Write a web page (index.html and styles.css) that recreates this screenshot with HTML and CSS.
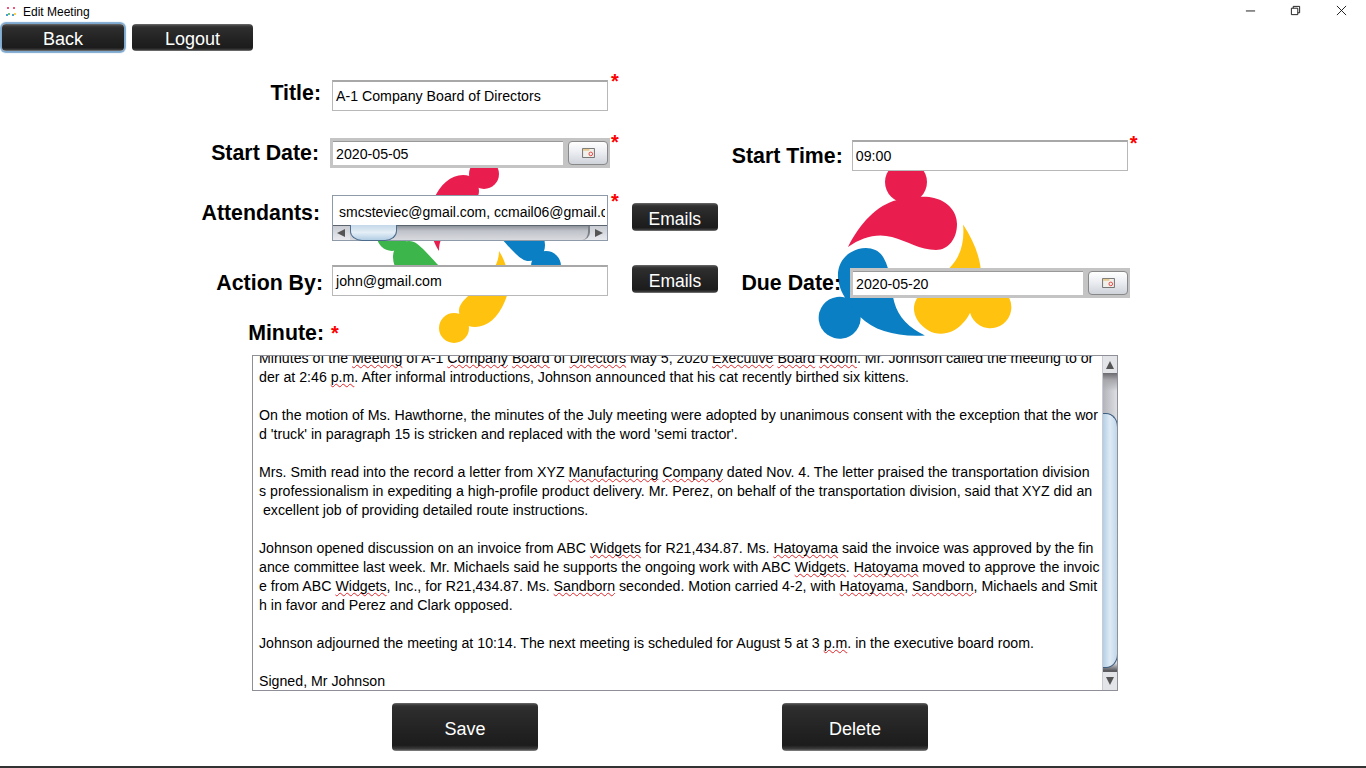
FILE: index.html
```html
<!DOCTYPE html>
<html lang="en">
<head>
<meta charset="utf-8">
<title>Edit Meeting</title>
<link rel="stylesheet" href="styles.css">
</head>
<body>
<div class="window">
  <header class="titlebar">
    <svg class="app-icon" viewBox="0 0 12 12"><circle cx="3" cy="2" r="1" fill="#e91e4f"/><circle cx="9" cy="2" r="1" fill="#e91e4f"/><circle cx="2" cy="9" r="1" fill="#0a7fc4"/><circle cx="8" cy="9" r="1" fill="#0a7fc4"/><circle cx="4" cy="8" r="1" fill="#3cb54a"/><circle cx="10" cy="8" r="1" fill="#ffc20e"/></svg>
    <span class="window-title">Edit Meeting</span>
    <div class="controls">
      <svg class="ctl ctl-min" viewBox="0 0 12 12"><path d="M1 6.5h10" stroke="#111" fill="none"/></svg>
      <svg class="ctl ctl-max" viewBox="0 0 12 12"><path d="M1.5 3.5h7v7h-7zM3.5 3.5v-2h7v7h-2" stroke="#111" fill="none"/></svg>
      <svg class="ctl ctl-close" viewBox="0 0 12 12"><path d="M1 1l10 10M11 1L1 11" stroke="#111" fill="none"/></svg>
    </div>
  </header>
  <nav class="toolbar">
    <button class="btn btn-back btn-focus">Back</button>
    <button class="btn btn-logout">Logout</button>
  </nav>
  <main class="form">
    <svg class="logo logo-small" viewBox="-100 -100 200 200">
      <defs>
        <g id="blade4">
          <circle cx="-15" cy="77" r="15"/>
          <path d="M30 0C39 14 43 34 36 50C29 67 18 76 6 76C-3 76-10 70-10 60C-10 54-6 50 0 44C12 32 30 20 30 0Z"/>
        </g>
      </defs>
      <use href="#blade4" fill="#ffc20e"/>
      <use href="#blade4" fill="#3cb54a" transform="rotate(90)"/>
      <use href="#blade4" fill="#e91e4f" transform="rotate(180)"/>
      <use href="#blade4" fill="#0a7fc4" transform="rotate(270)"/>
    </svg>
    <svg class="logo logo-large" viewBox="-100 -110 200 220">
      <defs>
        <g id="blade3">
          <circle cx="-6" cy="-87" r="21"/>
          <path d="M-64-22C-52-46-35-64-15-69C5-73 15-73 22-71C36-68 45-57 45-45C45-30 36-19 24-19C8-19-5-28-20-32C-35-36-50-32-64-22Z"/>
        </g>
      </defs>
      <use href="#blade3" fill="#e91e4f"/>
      <use href="#blade3" fill="#ffc20e" transform="rotate(120)"/>
      <use href="#blade3" fill="#0a7fc4" transform="rotate(240)"/>
    </svg>

    <div class="row row-title">
      <label class="label label-title">Title:</label>
      <div class="field field-title">A-1 Company Board of Directors</div>
      <span class="star star-title">*</span>
    </div>

    <div class="row row-start">
      <label class="label label-start">Start Date:</label>
      <div class="date date-start">
        <div class="date-text">2020-05-05</div>
        <button class="date-btn"><svg viewBox="0 0 14 11"><path d="M.5.5h13v10H.5z" fill="#f2f0ea" stroke="#666"/><path d="M1 1h7v2H1z" fill="#e6c98e"/><circle cx="9.5" cy="6.5" r="2" fill="none" stroke="#e0393a"/></svg></button>
      </div>
      <span class="star star-start">*</span>
      <label class="label label-time">Start Time:</label>
      <div class="field field-time">09:00</div>
      <span class="star star-time">*</span>
    </div>

    <div class="row row-attend">
      <label class="label label-attend">Attendants:</label>
      <div class="scrollbox">
        <div class="scrollbox-text">smcsteviec@gmail.com, ccmail06@gmail.com</div>
        <div class="hbar">
          <span class="arrow arrow-left"></span>
          <div class="hbar-track"><div class="hbar-thumb"></div></div>
          <span class="arrow arrow-right"></span>
        </div>
      </div>
      <span class="star star-attend">*</span>
      <button class="btn btn-emails btn-emails-a">Emails</button>
    </div>

    <div class="row row-action">
      <label class="label label-action">Action By:</label>
      <div class="field field-action">john@gmail.com</div>
      <button class="btn btn-emails btn-emails-b">Emails</button>
      <label class="label label-due">Due Date:</label>
      <div class="date date-due">
        <div class="date-text">2020-05-20</div>
        <button class="date-btn"><svg viewBox="0 0 14 11"><path d="M.5.5h13v10H.5z" fill="#f2f0ea" stroke="#666"/><path d="M1 1h7v2H1z" fill="#e6c98e"/><circle cx="9.5" cy="6.5" r="2" fill="none" stroke="#e0393a"/></svg></button>
      </div>
    </div>

    <div class="row row-minute">
      <label class="label label-minute">Minute:</label>
      <span class="star star-minute">*</span>
    </div>

    <div class="minutes">
      <div class="minutes-text">
        <div class="line">Minutes of the <u>Meeting</u> of A-1 <u>Company</u> <u>Board</u> of <u>Directors</u> May 5, 2020 <u>Executive</u> <u>Board</u> <u>Room</u>. Mr. Johnson called the meeting to or</div>
        <div class="line">der at 2:46 <u>p.m</u>. After informal introductions, Johnson announced that his cat recently birthed six kittens.</div>
        <div class="line">&nbsp;</div>
        <div class="line">On the motion of Ms. Hawthorne, the minutes of the July meeting were adopted by unanimous consent with the exception that the wor</div>
        <div class="line">d 'truck' in paragraph 15 is stricken and replaced with the word 'semi tractor'.</div>
        <div class="line">&nbsp;</div>
        <div class="line">Mrs. Smith read into the record a letter from XYZ <u>Manufacturing</u> <u>Company</u> dated Nov. 4. The letter praised the transportation division</div>
        <div class="line">s professionalism in expediting a high-profile product delivery. Mr. Perez, on behalf of the transportation division, said that XYZ did an</div>
        <div class="line">&nbsp;excellent job of providing detailed route instructions.</div>
        <div class="line">&nbsp;</div>
        <div class="line">Johnson opened discussion on an invoice from ABC <u>Widgets</u> for R21,434.87. Ms. <u>Hatoyama</u> said the invoice was approved by the fin</div>
        <div class="line">ance committee last week. Mr. Michaels said he supports the ongoing work with ABC <u>Widgets</u>. <u>Hatoyama</u> moved to approve the invoic</div>
        <div class="line">e from ABC <u>Widgets</u>, Inc., for R21,434.87. Ms. <u>Sandborn</u> seconded. Motion carried 4-2, with <u>Hatoyama</u>, <u>Sandborn</u>, Michaels and Smit</div>
        <div class="line">h in favor and Perez and Clark opposed.</div>
        <div class="line">&nbsp;</div>
        <div class="line">Johnson adjourned the meeting at 10:14. The next meeting is scheduled for August 5 at 3 <u>p.m</u>. in the executive board room.</div>
        <div class="line">&nbsp;</div>
        <div class="line">Signed, Mr Johnson</div>
      </div>
      <div class="vbar">
        <span class="arrow arrow-up"></span>
        <div class="vbar-track"><div class="vbar-thumb"></div></div>
        <span class="arrow arrow-down"></span>
      </div>
    </div>

    <div class="row row-actions">
      <button class="btn btn-big btn-save">Save</button>
      <button class="btn btn-big btn-delete">Delete</button>
    </div>
  </main>
  <div class="bottom-line"></div>
</div>
</body>
</html>
```
FILE: styles.css
```css
* { box-sizing: border-box; }
html, body { margin: 0; padding: 0; background: #fff; }
body { font-family: "Liberation Sans", Arial, sans-serif; color: #000; overflow: hidden; }
.window { width: 1366px; height: 768px; display: flex; flex-direction: column; position: relative; overflow: hidden; }

.titlebar { height: 24px; flex: none; display: flex; align-items: center; padding-left: 5px; font-size: 12px; }
.app-icon { width: 12px; height: 12px; flex: none; }
.window-title { margin-left: 6px; }
.controls { margin-left: auto; display: flex; margin-bottom: 4px; }
.ctl { width: 11px; height: 11px; display: block; }
.ctl-min { margin-right: 34px; }
.ctl-max { margin-right: 35px; }
.ctl-close { margin-right: 19px; }

.toolbar { height: 28px; flex: none; display: flex; gap: 8px; padding-left: 2px; }
.btn { border: 0; padding: 4px 0 0; color: #fff; font-family: inherit; font-size: 18px; background: linear-gradient(#6d6d6d 0, #3a3a3a 2px, #2e2e2e 4px, #232323 55%, #1c1c1c 88%, #3d3d3d 96%, #8b8b8b 100%); border-radius: 4px; display: block; flex: none; }
.btn-back { width: 122px; height: 27px; }
.btn-logout { width: 121px; height: 27px; }
.btn-focus { box-shadow: 0 0 1px 2px #7da8cf; }
.btn-emails { width: 86px; height: 28px; font-size: 17.5px; }
.btn-big { width: 146px; height: 48px; }

.form { flex: 1; position: relative; }
.logo { position: absolute; z-index: 0; }
.logo-small { left: 369px; top: 99px; width: 200px; height: 200px; }
.logo-large { left: 812px; top: 107px; width: 200px; height: 220px; }

.row { display: flex; align-items: flex-start; position: relative; z-index: 1; flex: none; }
.label { font-size: 21.33px; font-weight: 700; line-height: 26px; text-align: right; flex: none; white-space: nowrap; }
.field { background: #fff; border: 1px solid #b8b8b8; border-top: 2px solid #a8a8a8; font-size: 14.18px; height: 31px; line-height: 28px; padding-left: 3px; flex: none; width: 276px; }
.star { color: #f00; font-size: 20px; font-weight: 700; line-height: 20px; flex: none; }

.row-title { height: 58px; margin-top: 28px; }
.label-title { width: 321px; }
.field-title { margin-left: 11px; }
.star-title { margin-left: 3px; margin-top: -9px; }

.row-start { height: 57px; }
.label-start { width: 319px; margin-top: 2px; }
.date { margin-left: 11px; margin-top: 0; width: 280px; height: 30px; background: #c4c4c4; padding: 3px 2px 3px 3px; display: flex; flex: none; }
.date-text { width: 230px; height: 24px; background: #fff; border-top: 1px solid #999; font-size: 14.18px; line-height: 24px; padding-left: 3px; flex: none; }
.date-btn { margin-left: 5px; width: 40px; height: 24px; border: 1px solid #888; border-radius: 4px; background: linear-gradient(#fff, #eceef2 45%, #cfd3da); padding: 0; display: flex; align-items: center; justify-content: center; flex: none; }
.date-btn svg { width: 13px; height: 10px; display: block; }
.star-start { margin-left: 1px; margin-top: -6px; }
.label-time { width: 120px; margin-left: 104px; margin-top: 5px; }
.field-time { margin-left: 9px; margin-top: 2px; }
.star-time { margin-left: 2px; margin-top: -5px; }

.row-attend { height: 70px; }
.label-attend { width: 320px; margin-top: 5px; }
.scrollbox { margin-left: 12px; width: 276px; height: 46px; border: 1px solid #8f9aa8; background: #fff; flex: none; display: flex; flex-direction: column; }
.scrollbox-text { height: 29px; font-size: 14px; line-height: 32px; padding-left: 6px; white-space: nowrap; overflow: hidden; margin-right: 2px; }
.hbar { flex: 1; display: flex; align-items: center; background: linear-gradient(#c8ccd2, #e8eaee); border-top: 1px solid #5c6470; }
.hbar-track { flex: 1; height: 100%; position: relative; background: linear-gradient(#8e929a 0, #bfc2c9 35%, #d8dadf 100%); border-right: 2px solid #7c8088; border-radius: 0 0 8px 0; }
.hbar-thumb { position: absolute; left: 0; top: -1px; width: 47px; height: 16px; border: 1px solid #4d6c8c; border-top: 0; border-radius: 0 0 12px 12px / 0 0 10px 10px; background: linear-gradient(#c4d8ea, #e4eef6 50%, #b2cde4); }
.star-attend { margin-left: 3px; margin-top: -4px; }
.btn-emails-a { margin-left: 13px; margin-top: 8px; }

.arrow { width: 0; height: 0; flex: none; display: block; border-style: solid; border-color: transparent; }
.arrow-left { margin: 0 5px 0 4px; border-width: 4px 8px 4px 0; border-right-color: #555; }
.arrow-right { margin: 0 4px 0 5px; border-width: 4px 0 4px 8px; border-left-color: #555; }
.arrow-up { margin: 5px auto 4px; border-width: 0 4px 8px 4px; border-bottom-color: #555; }
.arrow-down { margin: 5px auto 5px; border-width: 8px 4px 0 4px; border-top-color: #555; }

.row-action { height: 56px; }
.label-action { width: 323px; margin-top: 5px; }
.field-action { margin-left: 9px; }
.btn-emails-b { margin-left: 24px; }
.label-due { width: 102px; margin-left: 21px; margin-top: 5px; }
.date-due { margin-left: 9px; margin-top: 3px; }

.row-minute { height: 34px; }
.label-minute { width: 324px; margin-top: -1px; }
.star-minute { margin-left: 7px; margin-top: 2px; }

.minutes { margin-left: 252px; width: 866px; height: 336px; background: #fff; border: 1px solid #8f8f97; flex: none; display: flex; overflow: hidden; position: relative; z-index: 1; }
.minutes-text { flex: 1; font-size: 14.18px; line-height: 19px; padding-left: 6px; margin-top: -7px; white-space: nowrap; overflow: hidden; }
.minutes-text u { text-decoration: underline wavy #e0262a 1px; text-decoration-skip-ink: none; text-underline-offset: 1px; }
.line { height: 19px; }
.vbar { width: 15px; flex: none; display: flex; flex-direction: column; background: #e2e4e8; border-left: 1px solid #c8ccd2; }
.vbar-track { flex: 1; position: relative; background: linear-gradient(#6c6c70 0, #a8a8ac 7px, transparent 18px, transparent 290px, #55555a 298px, #9a9a9e 304px), linear-gradient(90deg, #b2b4ba, #dcdee2); }
.vbar-thumb { position: absolute; top: 40px; left: 0; right: -1px; height: 255px; border: 1px solid #3f5f80; border-left: 0; border-radius: 0 12px 12px 0 / 0 14px 14px 0; background: linear-gradient(90deg, #b4cee6, #dfebf5 50%, #c0d6ea); }

.row-actions { margin-top: 12px; padding-left: 392px; gap: 244px; }
.bottom-line { position: absolute; left: 0; right: 0; bottom: 0; height: 2px; background: #333; }
```
